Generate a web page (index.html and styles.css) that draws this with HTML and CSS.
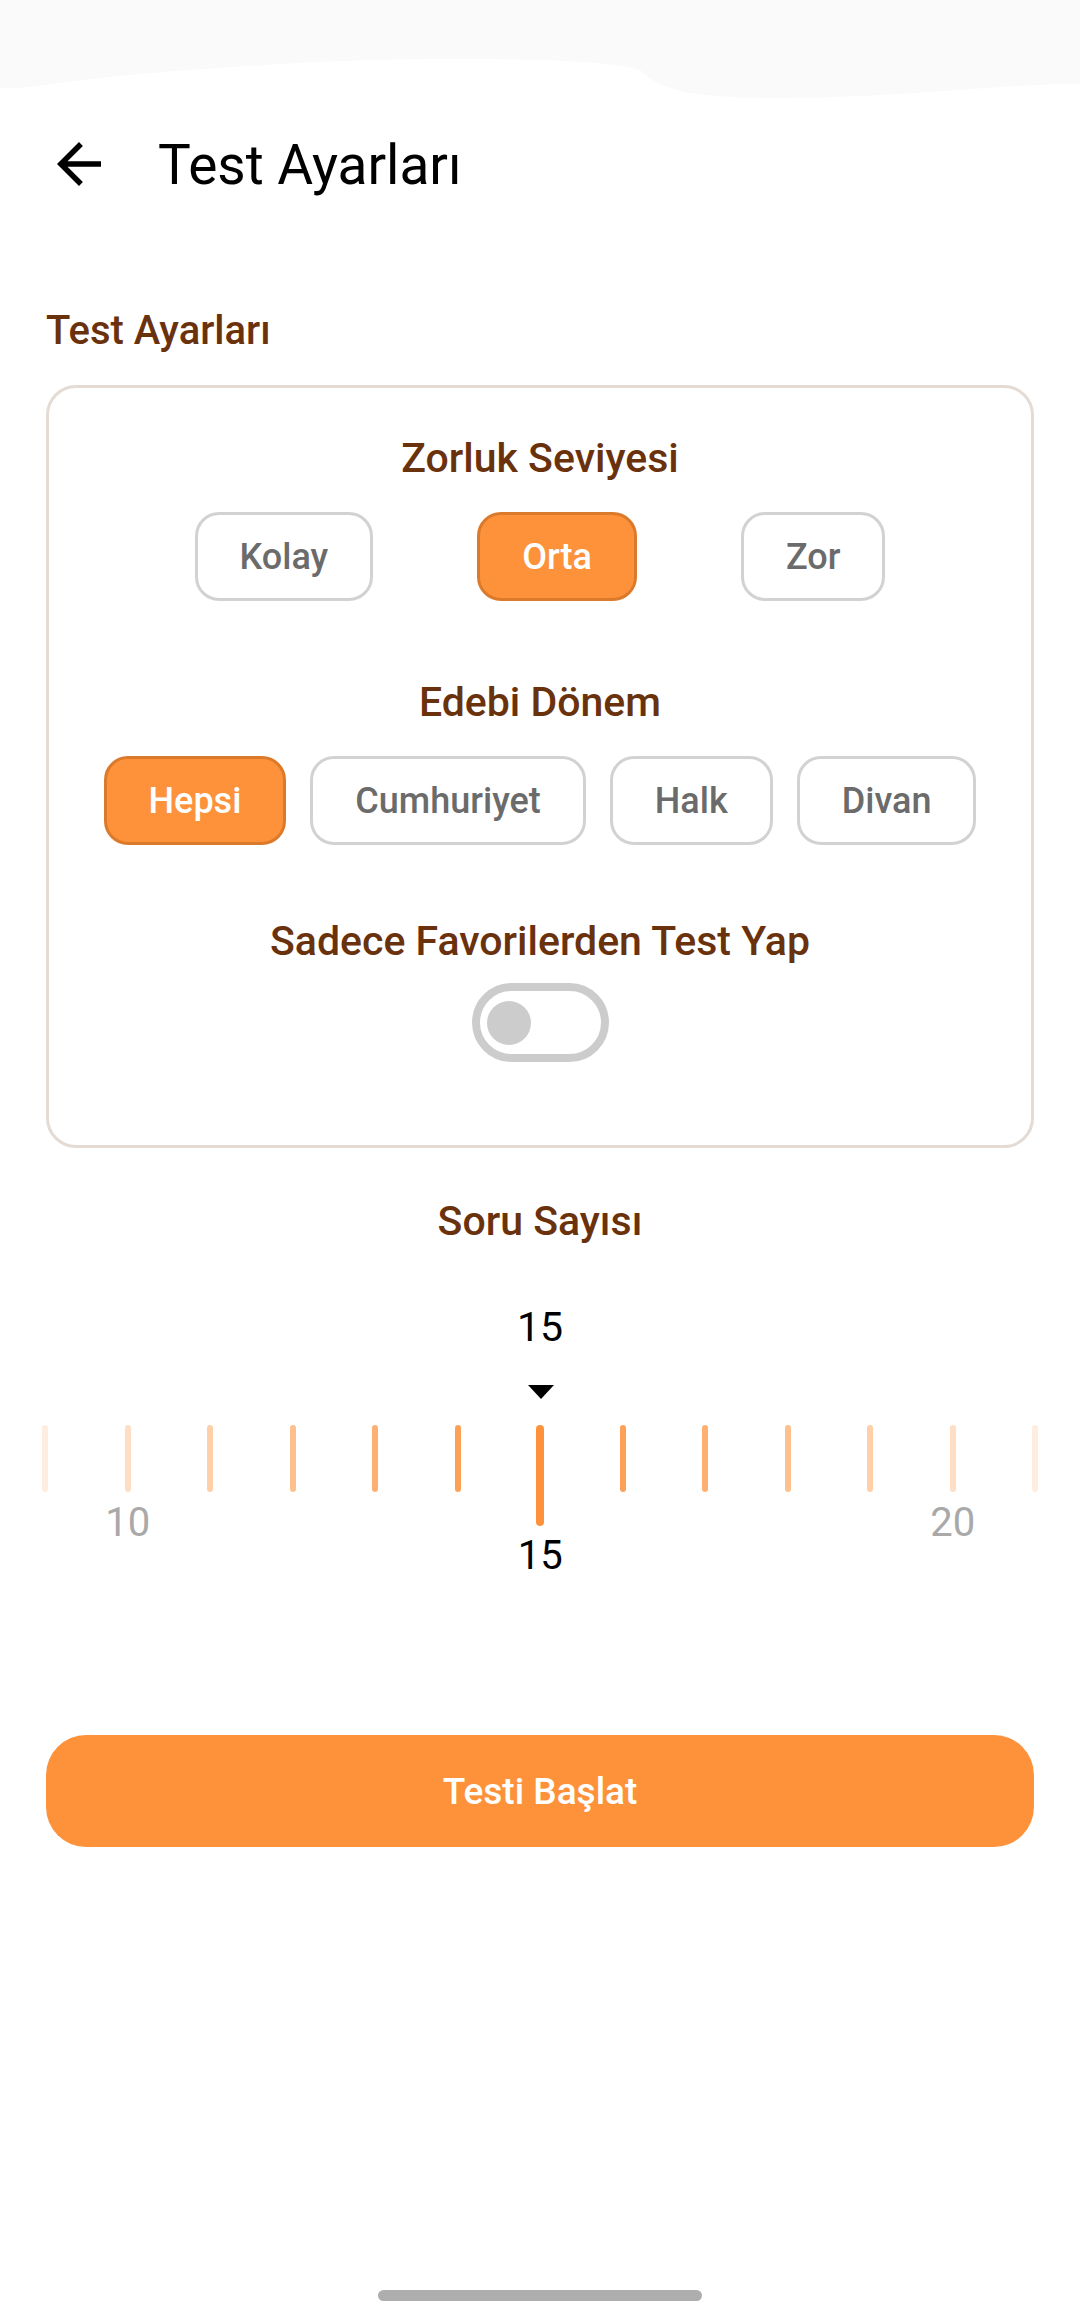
FILE: index.html
```html
<!DOCTYPE html>
<html lang="tr">
<head>
<meta charset="utf-8">
<title>Test Ayarları</title>
<link rel="stylesheet" href="styles.css">
</head>
<body>
<div class="screen">
  <div class="status">
    <svg class="smear" viewBox="0 0 1080 100" preserveAspectRatio="none" aria-hidden="true">
      <path d="M0 0 H1080 V84 C1000 84 900 98 780 98 C690 98 660 90 640 70 C600 58 470 58 370 60 C300 62 180 70 120 76 C60 82 20 90 0 88 Z" fill="#fafafa"/>
    </svg>
  </div>

  <header class="appbar">
    <svg class="back" viewBox="0 0 24 24" aria-hidden="true">
      <path d="M20 11H7.83l5.59-5.59L12 4l-8 8 8 8 1.41-1.41L7.83 13H20v-2z" fill="#000"/>
    </svg>
    <h1 class="appbar-title">Test Ayarları</h1>
  </header>

  <main class="content">
    <h2 class="section-label">Test Ayarları</h2>

    <section class="card">
      <h3 class="group-title">Zorluk Seviyesi</h3>
      <div class="chips chips-wide">
        <button class="chip">Kolay</button>
        <button class="chip chip-active">Orta</button>
        <button class="chip">Zor</button>
      </div>

      <h3 class="group-title group-gap">Edebi Dönem</h3>
      <div class="chips chips-tight">
        <button class="chip chip-active">Hepsi</button>
        <button class="chip">Cumhuriyet</button>
        <button class="chip">Halk</button>
        <button class="chip">Divan</button>
      </div>

      <h3 class="group-title switch-gap">Sadece Favorilerden Test Yap</h3>
      <div class="switch-row">
        <span class="switch"><span class="switch-thumb"></span></span>
      </div>
    </section>

    <h3 class="group-title count-title">Soru Sayısı</h3>
    <div class="picked">15</div>
    <div class="pointer-row"><span class="pointer"></span></div>

    <div class="ruler">
      <div class="cell"><span class="tick" style="opacity:0.16"></span></div>
      <div class="cell"><span class="tick" style="opacity:0.3"></span><span class="tick-label">10</span></div>
      <div class="cell"><span class="tick" style="opacity:0.44"></span></div>
      <div class="cell"><span class="tick" style="opacity:0.58"></span></div>
      <div class="cell"><span class="tick" style="opacity:0.72"></span></div>
      <div class="cell"><span class="tick" style="opacity:0.86"></span></div>
      <div class="cell"><span class="tick tick-center"></span><span class="tick-label tick-label-center">15</span></div>
      <div class="cell"><span class="tick" style="opacity:0.86"></span></div>
      <div class="cell"><span class="tick" style="opacity:0.72"></span></div>
      <div class="cell"><span class="tick" style="opacity:0.58"></span></div>
      <div class="cell"><span class="tick" style="opacity:0.44"></span></div>
      <div class="cell"><span class="tick" style="opacity:0.3"></span><span class="tick-label">20</span></div>
      <div class="cell"><span class="tick" style="opacity:0.16"></span></div>
    </div>

    <button class="start">Testi Başlat</button>
  </main>

  <div class="home-bar"><span class="home-indicator"></span></div>
</div>
</body>
</html>
```

FILE: styles.css
```css
* { box-sizing: border-box; }

html, body {
  margin: 0;
  padding: 0;
  background: #ffffff;
}

body {
  font-family: Roboto, "Noto Sans", "Liberation Sans", sans-serif;
  color: #000;
}

.screen {
  width: 1080px;
  height: 2316px;
  display: flex;
  flex-direction: column;
  overflow: hidden;
}

.status {
  height: 96px;
  flex: none;
}

.smear {
  display: block;
  width: 1080px;
  height: 100px;
}

.appbar {
  height: 140px;
  display: flex;
  align-items: center;
  flex: none;
  margin-top: -1px;
}

.back {
  width: 66px;
  height: 66px;
  margin-left: 46px;
  margin-top: -3px;
  flex: none;
}

.appbar-title {
  margin: 0 0 0 46px;
  font-size: 55px;
  font-weight: 400;
  line-height: 66px;
  color: #000;
}

.content {
  display: flex;
  flex-direction: column;
}

.section-label {
  margin: 73px 0 0 46px;
  font-size: 40px;
  font-weight: 500;
  line-height: 46px;
  color: #6a320c;
}

.card {
  margin: 31px 46px 0;
  border: 3px solid #e3dbd4;
  border-radius: 30px;
  padding: 45px 0 83px;
  display: flex;
  flex-direction: column;
  align-items: center;
}

.group-title {
  margin: 0;
  font-size: 41px;
  font-weight: 500;
  line-height: 50px;
  color: #6a320c;
  text-align: center;
}

.group-gap {
  margin-top: 76px;
}

.switch-gap {
  margin-top: 71px;
}

.chips {
  display: flex;
  justify-content: center;
  margin-top: 29px;
}

.chips-wide { gap: 104px; }
.chips-tight { gap: 24px; }

.chip {
  height: 89px;
  padding: 0 42px;
  border: 3px solid #d2d2d2;
  border-radius: 24px;
  background: #fff;
  font-family: Roboto, "Noto Sans", "Liberation Sans", sans-serif;
  font-size: 36px;
  font-weight: 500;
  color: #6b6b6b;
  display: flex;
  align-items: center;
  justify-content: center;
}

.chip-active {
  background: #fd923b;
  border-color: #dc7a2c;
  color: #ffffff;
}

.switch-row {
  margin-top: 17px;
  display: flex;
  justify-content: center;
}

.switch {
  width: 137px;
  height: 79px;
  border: 8px solid #cccccc;
  border-radius: 40px;
  display: flex;
  align-items: center;
  padding-left: 7px;
}

.switch-thumb {
  width: 44px;
  height: 44px;
  border-radius: 50%;
  background: #cccccc;
}

.count-title {
  margin-top: 48px;
}

.picked {
  margin-top: 56px;
  text-align: center;
  font-size: 41px;
  line-height: 50px;
  color: #000;
}

.pointer-row {
  margin-top: 33px;
  display: flex;
  justify-content: center;
  padding-left: 2px;
}

.pointer {
  width: 0;
  height: 0;
  border-left: 13px solid transparent;
  border-right: 13px solid transparent;
  border-top: 14px solid #000;
}

.ruler {
  margin: 26px 0 0 4px;
  display: flex;
  height: 155px;
}

.cell {
  width: 82.5px;
  flex: none;
  display: flex;
  flex-direction: column;
  align-items: center;
}

.tick {
  width: 6px;
  height: 67px;
  border-radius: 3px;
  background: #fd923b;
}

.tick-center {
  width: 8px;
  height: 101px;
  border-radius: 4px;
}

.tick-label {
  margin-top: 7px;
  font-size: 40px;
  line-height: 48px;
  color: #a9a9a9;
}

.tick-label-center {
  margin-top: 6px;
  color: #000;
}

.start {
  margin: 155px 46px 0;
  height: 112px;
  border: none;
  border-radius: 40px;
  background: #fd923b;
  color: #fff;
  font-family: Roboto, "Noto Sans", "Liberation Sans", sans-serif;
  font-size: 37px;
  font-weight: 500;
}

.home-bar {
  margin-top: auto;
  height: 26px;
  display: flex;
  justify-content: center;
  flex: none;
}

.home-indicator {
  width: 324px;
  height: 11px;
  border-radius: 6px;
  background: #aeaeae;
}
```
